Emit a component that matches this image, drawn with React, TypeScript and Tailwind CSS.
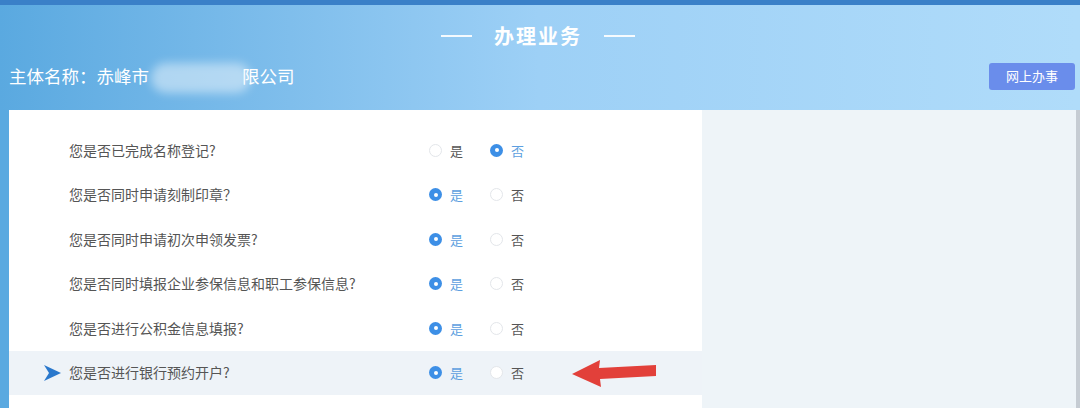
import React from "react";

const questions: { q: string; yes: boolean }[] = [
  { q: "您是否已完成名称登记?", yes: false },
  { q: "您是否同时申请刻制印章？", yes: true },
  { q: "您是否同时申请初次申领发票?", yes: true },
  { q: "您是否同时填报企业参保信息和职工参保信息?", yes: true },
  { q: "您是否进行公积金信息填报?", yes: true },
  { q: "您是否进行银行预约开户?", yes: true },
];

function Radio({ on, label }: { on: boolean; label: string }) {
  return (
    <div className="flex items-center gap-[8px]">
      {on ? (
        <span className="w-[13px] h-[13px] rounded-full bg-[#3d8fe6] flex items-center justify-center">
          <span className="w-[4px] h-[4px] rounded-full bg-white" />
        </span>
      ) : (
        <span className="w-[13px] h-[13px] rounded-full border border-[#e3e6ea] bg-white" />
      )}
      <span className={on ? "text-[13px] text-[#5d9fe0]" : "text-[13px] text-[#555]"}>{label}</span>
    </div>
  );
}

export default function App() {
  return (
    <div
      className="w-[1080px] h-[410px] overflow-hidden bg-white relative"
      style={{ fontFamily: '"Noto Sans CJK SC", "Noto Sans", sans-serif' }}
    >
      <div className="h-[5px] bg-[#3a80c8]" />
      <div className="flex">
        <div className="flex-1 flex flex-col">
          {/* header */}
          <div className="h-[105px] bg-gradient-to-r from-[#5aa9e0] via-[#9dd0f6] to-[#b0dcfa] relative">
            <div className="pt-[15px] flex justify-center items-center gap-[22px] text-white">
              <span className="w-[31px] h-[2px] bg-white/90" />
              <span className="text-[20px] font-bold tracking-[2px] leading-[32px]">办理业务</span>
              <span className="w-[31px] h-[2px] bg-white/90" />
            </div>
            <div className="flex items-center justify-between pl-[9px] pr-[1px] mt-[10px]">
              <div className="flex items-center text-white text-[17.5px] leading-[28px]">
                <span>主体名称：赤峰市</span>
                <span className="w-[88px] h-[22px] relative">
                  <span className="absolute left-[2px] top-[-2px] w-[100px] h-[30px] rounded-full bg-white/45 blur-[5px]" />
                </span>
                <span className="ml-[5px]">限公司</span>
              </div>
              <div className="w-[86px] h-[27px] rounded-[3px] bg-[#6a8deb] text-white text-[13px] flex items-center justify-center">
                网上办事
              </div>
            </div>
          </div>
          {/* body */}
          <div className="flex h-[300px]">
            <div className="w-[9px] bg-[#5aa9e0] h-[298px]" />
            <div className="w-[693px] bg-white pt-[18px]">
              {questions.map((item, i) => {
                const last = i === questions.length - 1;
                return (
                  <div
                    key={i}
                    className={`h-[44.5px] flex items-center ${last ? "bg-[#eef3f8]" : ""}`}
                  >
                    <div className="w-[60px] flex justify-end pr-[8px]">
                      {last && (
                        <svg width="17" height="16" viewBox="0 0 17 16">
                          <path d="M0 0 L17 8 L0 16 L5 8 Z" fill="#2a78cc" />
                        </svg>
                      )}
                    </div>
                    <div className="w-[360px] text-[14px] text-[#555]">{item.q}</div>
                    <div className="flex items-center gap-[27px]">
                      <Radio on={item.yes} label="是" />
                      <Radio on={!item.yes} label="否" />
                    </div>
                    {last && (
                      <svg width="86" height="28" viewBox="0 0 86 28" className="ml-[48px]">
                        <path d="M0 15 L28 1 L27 9 L84 6 L84 17 L28 20 L29 28 Z" fill="#e2403a" />
                      </svg>
                    )}
                  </div>
                );
              })}
            </div>
            <div className="flex-1 bg-[#eef4f8] h-[298px]" />
          </div>
        </div>
        <div className="w-[4px] flex flex-col">
          <div className="h-[105px] bg-[#b0dcfa]" />
          <div className="h-[298px] bg-[#c6ccd3]" />
        </div>
      </div>
    </div>
  );
}
